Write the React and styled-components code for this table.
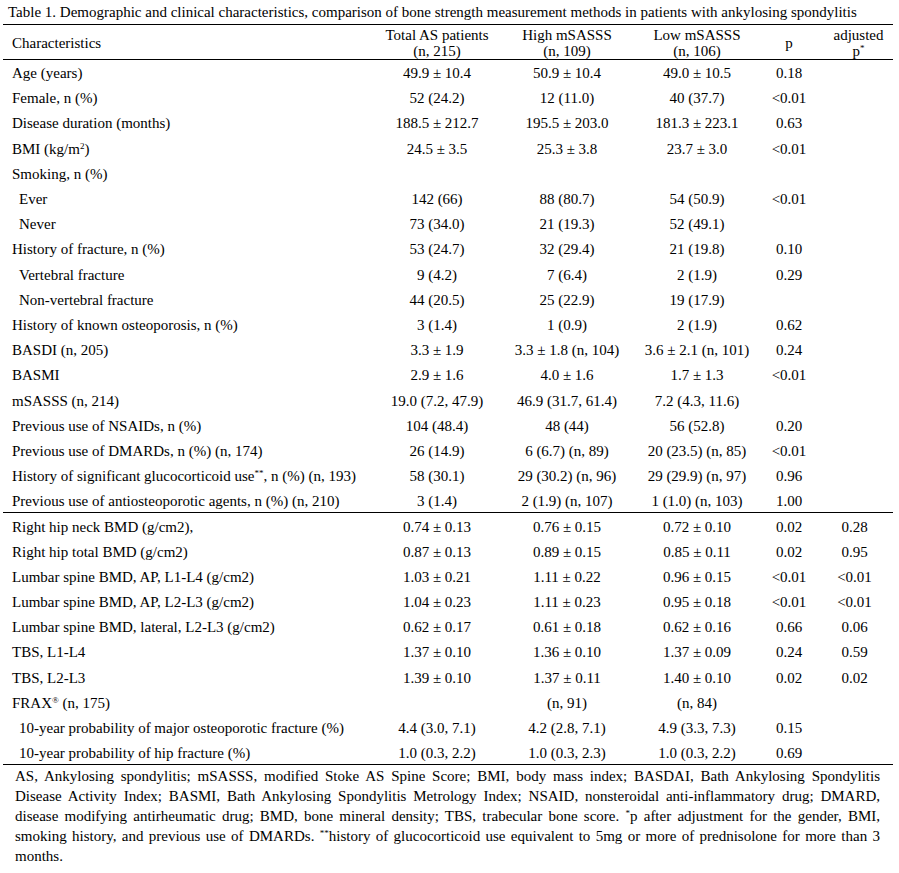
import React from "react";
import styled, { createGlobalStyle } from "styled-components";

const GlobalStyle = createGlobalStyle`
  body {
    margin: 0;
    background: #fff;
    color: #000;
    font-family: "Liberation Serif", "Times New Roman", serif;
  }
`;

const Page = styled.div`
  width: 890px;
  padding: 2px 0 0 3px;
  font-size: 15px;
`;

const Title = styled.div`
  padding-left: 5px;
  line-height: 20px;
  height: 22px;
  white-space: nowrap;
`;

const Table = styled.table`
  width: 890px;
  border-collapse: collapse;
  table-layout: fixed;
  border-top: 1px solid #000;
  border-bottom: 1px solid #000;
`;

const HeadRow = styled.tr`
  height: 35px;
  border-bottom: 1px solid #000;
`;

const HeadCell = styled.th`
  font-weight: normal;
  line-height: 16px;
  padding: 1px 0 0;
  vertical-align: middle;
  text-align: ${(p) => (p.$left ? "left" : "center")};
  padding-left: ${(p) => (p.$left ? "9px" : p.$shift || "0")};
`;

const Row = styled.tr`
  height: 25.2px;
  border-top: ${(p) => (p.$divider ? "1px solid #000" : "none")};
`;

const Label = styled.td`
  padding: 3px 0 0 ${(p) => (p.$indent ? "16px" : "9px")};
  white-space: nowrap;
  vertical-align: middle;
`;

const Cell = styled.td`
  padding: 3px 0 0;
  text-align: center;
  white-space: nowrap;
  vertical-align: middle;
`;

const Sup = styled.sup`
  font-size: 9px;
  line-height: 0;
  vertical-align: 5px;
`;

const Note = styled.p`
  margin: 0;
  padding: 1px 13px 0 12px;
  line-height: 20px;
  text-align: justify;
`;

// label, total, high, low, p, adjusted p, indent
const firstBlock = [
  ["Age (years)", "49.9 ± 10.4", "50.9 ± 10.4", "49.0 ± 10.5", "0.18"],
  ["Female, n (%)", "52 (24.2)", "12 (11.0)", "40 (37.7)", "<0.01"],
  ["Disease duration (months)", "188.5 ± 212.7", "195.5 ± 203.0", "181.3 ± 223.1", "0.63"],
  [<>BMI (kg/m<Sup>2</Sup>)</>, "24.5 ± 3.5", "25.3 ± 3.8", "23.7 ± 3.0", "<0.01"],
  ["Smoking, n (%)"],
  ["Ever", "142 (66)", "88 (80.7)", "54 (50.9)", "<0.01", "", true],
  ["Never", "73 (34.0)", "21 (19.3)", "52 (49.1)", "", "", true],
  ["History of fracture, n (%)", "53 (24.7)", "32 (29.4)", "21 (19.8)", "0.10"],
  ["Vertebral fracture", "9 (4.2)", "7 (6.4)", "2 (1.9)", "0.29", "", true],
  ["Non-vertebral fracture", "44 (20.5)", "25 (22.9)", "19 (17.9)", "", "", true],
  ["History of known osteoporosis, n (%)", "3 (1.4)", "1 (0.9)", "2 (1.9)", "0.62"],
  ["BASDI (n, 205)", "3.3 ± 1.9", "3.3 ± 1.8 (n, 104)", "3.6 ± 2.1 (n, 101)", "0.24"],
  ["BASMI", "2.9 ± 1.6", "4.0 ± 1.6", "1.7 ± 1.3", "<0.01"],
  ["mSASSS (n, 214)", "19.0 (7.2, 47.9)", "46.9 (31.7, 61.4)", "7.2 (4.3, 11.6)"],
  ["Previous use of NSAIDs, n (%)", "104 (48.4)", "48 (44)", "56 (52.8)", "0.20"],
  ["Previous use of DMARDs, n (%) (n, 174)", "26 (14.9)", "6 (6.7) (n, 89)", "20 (23.5) (n, 85)", "<0.01"],
  [
    <>History of significant glucocorticoid use<Sup>**</Sup>, n (%) (n, 193)</>,
    "58 (30.1)",
    "29 (30.2) (n, 96)",
    "29 (29.9) (n, 97)",
    "0.96",
  ],
  ["Previous use of antiosteoporotic agents, n (%) (n, 210)", "3 (1.4)", "2 (1.9) (n, 107)", "1 (1.0) (n, 103)", "1.00"],
];

const secondBlock = [
  ["Right hip neck BMD (g/cm2),", "0.74 ± 0.13", "0.76 ± 0.15", "0.72 ± 0.10", "0.02", "0.28"],
  ["Right hip total BMD (g/cm2)", "0.87 ± 0.13", "0.89 ± 0.15", "0.85 ± 0.11", "0.02", "0.95"],
  ["Lumbar spine BMD, AP, L1-L4 (g/cm2)", "1.03 ± 0.21", "1.11 ± 0.22", "0.96 ± 0.15", "<0.01", "<0.01"],
  ["Lumbar spine BMD, AP, L2-L3 (g/cm2)", "1.04 ± 0.23", "1.11 ± 0.23", "0.95 ± 0.18", "<0.01", "<0.01"],
  ["Lumbar spine BMD, lateral, L2-L3 (g/cm2)", "0.62 ± 0.17", "0.61 ± 0.18", "0.62 ± 0.16", "0.66", "0.06"],
  ["TBS, L1-L4", "1.37 ± 0.10", "1.36 ± 0.10", "1.37 ± 0.09", "0.24", "0.59"],
  ["TBS, L2-L3", "1.39 ± 0.10", "1.37 ± 0.11", "1.40 ± 0.10", "0.02", "0.02"],
  [<>FRAX<Sup>®</Sup> (n, 175)</>, "", "(n, 91)", "(n, 84)"],
  ["10-year probability of major osteoporotic fracture (%)", "4.4 (3.0, 7.1)", "4.2 (2.8, 7.1)", "4.9 (3.3, 7.3)", "0.15", "", true],
  ["10-year probability of hip fracture (%)", "1.0 (0.3, 2.2)", "1.0 (0.3, 2.3)", "1.0 (0.3, 2.2)", "0.69", "", true],
];

const DataRow = ({ row, divider }) => {
  const [label, total = "", high = "", low = "", p = "", adj = "", indent] = row;
  return (
    <Row $divider={divider}>
      <Label $indent={indent}>{label}</Label>
      <Cell>{total}</Cell>
      <Cell>{high}</Cell>
      <Cell>{low}</Cell>
      <Cell>{p}</Cell>
      <Cell>{adj}</Cell>
    </Row>
  );
};

export default function App() {
  return (
    <Page>
      <GlobalStyle />
      <Title>
        Table 1. Demographic and clinical characteristics, comparison of bone strength measurement methods in
        patients with ankylosing spondylitis
      </Title>
      <Table>
        <colgroup>
          <col style={{ width: 369 }} />
          <col style={{ width: 130 }} />
          <col style={{ width: 130 }} />
          <col style={{ width: 130 }} />
          <col style={{ width: 54 }} />
          <col style={{ width: 77 }} />
        </colgroup>
        <thead>
          <HeadRow>
            <HeadCell $left>Characteristics</HeadCell>
            <HeadCell>
              Total AS patients
              <br />
              (n, 215)
            </HeadCell>
            <HeadCell>
              High mSASSS
              <br />
              (n, 109)
            </HeadCell>
            <HeadCell>
              Low mSASSS
              <br />
              (n, 106)
            </HeadCell>
            <HeadCell>p</HeadCell>
            <HeadCell $shift="8px">
              adjusted
              <br />
              p<Sup>*</Sup>
            </HeadCell>
          </HeadRow>
        </thead>
        <tbody>
          {firstBlock.map((row, i) => (
            <DataRow key={`a${i}`} row={row} />
          ))}
          {secondBlock.map((row, i) => (
            <DataRow key={`b${i}`} row={row} divider={i === 0} />
          ))}
        </tbody>
      </Table>
      <Note>
        AS, Ankylosing spondylitis; mSASSS, modified Stoke AS Spine Score; BMI, body mass index; BASDAI, Bath
        Ankylosing Spondylitis Disease Activity Index; BASMI, Bath Ankylosing Spondylitis Metrology Index; NSAID,
        nonsteroidal anti-inflammatory drug; DMARD, disease modifying antirheumatic drug; BMD, bone mineral density;
        TBS, trabecular bone score. <Sup>*</Sup>p after adjustment for the gender, BMI, smoking history, and previous
        use of DMARDs. <Sup>**</Sup>history of glucocorticoid use equivalent to 5mg or more of prednisolone for more
        than 3 months.
      </Note>
    </Page>
  );
}
